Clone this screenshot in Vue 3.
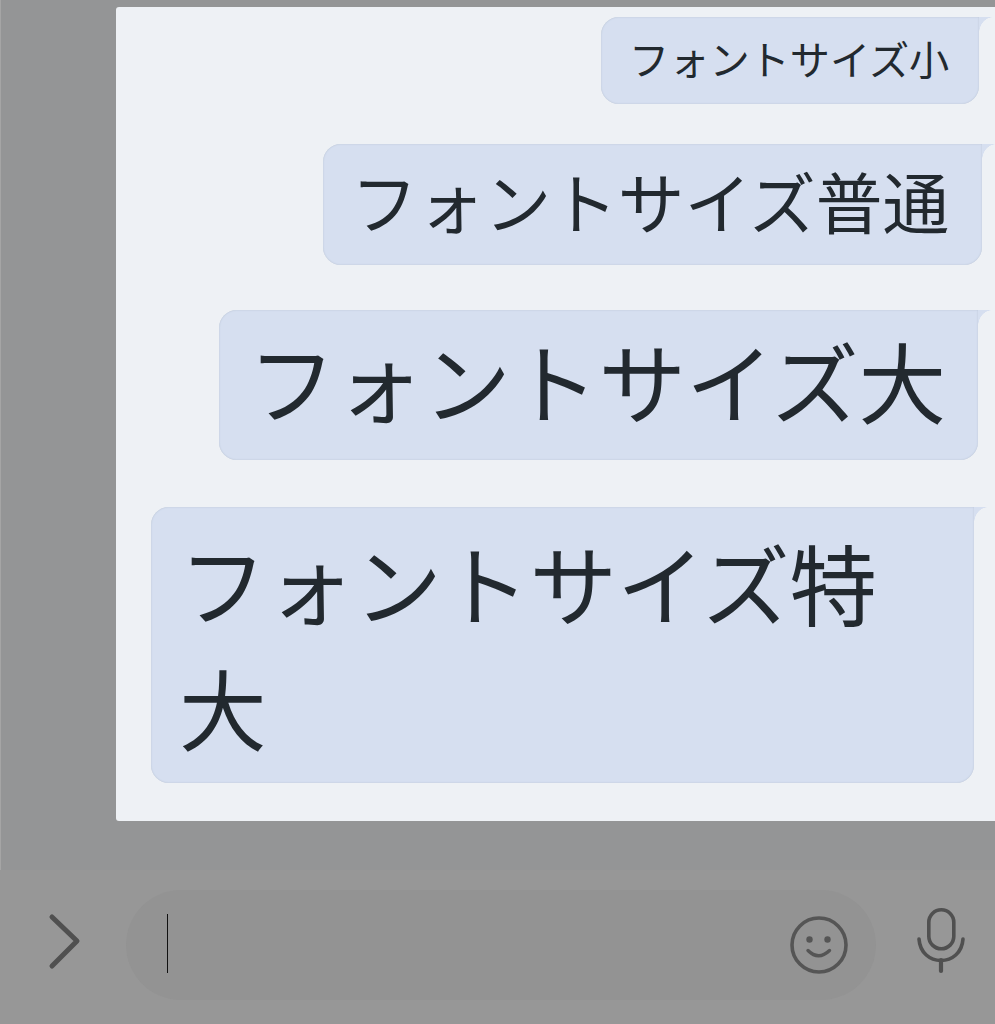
<script setup>
const messages = [
  { id: 'small', text: 'フォントサイズ小' },
  { id: 'normal', text: 'フォントサイズ普通' },
  { id: 'large', text: 'フォントサイズ大' },
  { id: 'xlarge', text: 'フォントサイズ特大' },
]
</script>

<template>
  <div class="screen">
    <main class="chat">
      <section class="panel">
        <div v-for="m in messages" :key="m.id" class="bubble" :class="m.id">{{ m.text }}</div>
      </section>
    </main>
    <footer class="bar">
      <svg class="chevron" width="50" height="60" viewBox="0 0 50 60" fill="none">
        <path d="M12 7 L37 31 L12 56" stroke="#505050" stroke-width="5" stroke-linecap="round" stroke-linejoin="round" />
      </svg>
      <div class="pill">
        <span class="caret"></span>
        <svg class="smile" width="60" height="60" viewBox="0 0 60 60" fill="none">
          <circle cx="30" cy="30" r="27" stroke="#555" stroke-width="3.6" />
          <circle cx="20.5" cy="24.5" r="3.2" fill="#555" />
          <circle cx="38.5" cy="24.5" r="3.2" fill="#555" />
          <path d="M19 35.5 Q29.5 46 40.5 35.5" stroke="#555" stroke-width="3.4" stroke-linecap="round" />
        </svg>
      </div>
      <svg class="mic" width="50" height="66" viewBox="0 0 50 66" fill="none">
        <rect x="11.8" y="1.8" width="25" height="39" rx="12.500" stroke="#505050" stroke-width="3.6" />
        <path d="M2 31 C3 45 13 52.500 24 52.500 C35 52.500 45 45 46 31" stroke="#505050" stroke-width="3.6" stroke-linecap="round" />
        <path d="M24 52 V63" stroke="#505050" stroke-width="4.2" stroke-linecap="round" />
      </svg>
    </footer>
  </div>
</template>

<style scoped>
.screen {
  width: 995px;
  height: 1024px;
  display: flex;
  flex-direction: column;
  overflow: hidden;
  background: #979797;
  font-family: "Noto Sans CJK JP", "Noto Sans", sans-serif;
}

.chat {
  height: 870px;
  padding: 7px 0 0 116px;
  box-sizing: border-box;
  background: #949596;
  border-left: 1px solid #a5a5a5;
}

.panel {
  height: 814px;
  margin-left: -1px;
  padding-top: 10px;
  box-sizing: border-box;
  display: flex;
  flex-direction: column;
  align-items: flex-end;
  background: #eef1f5;
  border-radius: 3px 0 0 3px;
}

.bubble {
  position: relative;
  box-sizing: border-box;
  color: #22292f;
  background: #d6dff0;
  border-radius: 18px 0 18px 18px;
  box-shadow: inset 0 0 1.500px #aab6c9;
}

/* little tail on the top right corner */
.bubble::after {
  content: "";
  position: absolute;
  left: 100%;
  top: 0;
  width: 14px;
  height: 16px;
  background: radial-gradient(ellipse 14px 16px at 100% 100%, transparent 97%, #d6dff0 100%);
}

.small {
  width: 378px;
  height: 87px;
  margin-right: 16px;
  padding: 12px 0 0 28px;
  font-size: 40.200px;
  line-height: 57px;
  white-space: nowrap;
}

.normal {
  width: 659px;
  height: 121px;
  margin-top: 40px;
  margin-right: 13px;
  padding: 8px 0 0 28px;
  font-size: 66.700px;
  line-height: 96px;
  white-space: nowrap;
}

.large {
  width: 759px;
  height: 150px;
  margin-top: 45px;
  margin-right: 17px;
  padding: 6px 0 0 29px;
  font-size: 87.600px;
  line-height: 126px;
  white-space: nowrap;
}

.xlarge {
  width: 823px;
  height: 276px;
  margin-top: 47px;
  margin-right: 21px;
  padding: 11px 30px 0 28px;
  font-size: 87.600px;
  line-height: 125px;
}

.bar {
  flex: 1;
  display: flex;
  align-items: center;
  padding-left: 40px;
  background: #979797;
}

.chevron {
  margin-top: -14px;
}

.pill {
  width: 750px;
  height: 110px;
  margin-left: 36px;
  padding: 0 27px 0 41px;
  box-sizing: border-box;
  display: flex;
  align-items: center;
  justify-content: space-between;
  background: #939393;
  border-radius: 55px;
  margin-top: -4px;
}

.caret {
  width: 1px;
  height: 59px;
  background: #111;
  margin-top: -4px;
}

.mic {
  margin-left: 41px;
  margin-top: -12px;
}
</style>
